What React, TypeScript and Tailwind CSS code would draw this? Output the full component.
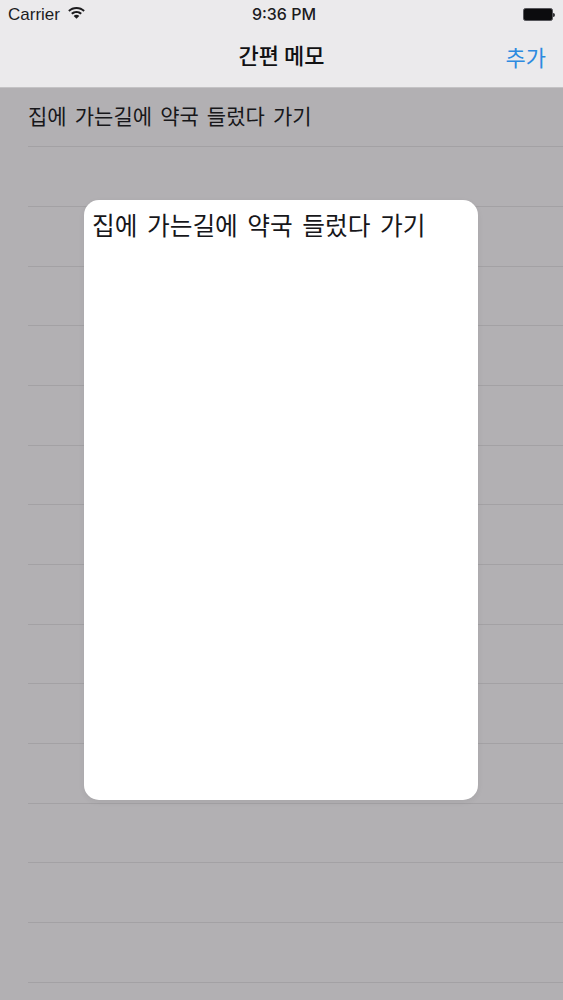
const rows = Array.from({ length: 15 }, (_, i) => i);

function WifiIcon() {
  return (
    <svg className="mb-[3px] ml-px" width="17" height="12" viewBox="0 0 17 12" fill="#1c1c1e">
      <path d="M8.5 0C5.3 0 2.4 1.2 0.2 3.3L1.6 4.8C3.4 3 5.8 2 8.5 2s5.1 1 6.9 2.8l1.4-1.5C14.6 1.2 11.7 0 8.5 0z" />
      <path d="M8.5 3.9c-2.1 0-4 .8-5.4 2.2l1.4 1.5C5.5 6.6 6.9 6 8.5 6s3 .6 4 1.6l1.4-1.5C12.5 4.7 10.6 3.9 8.5 3.9z" />
      <path d="M8.5 7.7c-1.1 0-2.1.4-2.8 1.2L8.5 11.8l2.8-2.9C10.6 8.1 9.6 7.7 8.5 7.7z" />
    </svg>
  );
}

function BatteryIcon() {
  return (
    <div className="flex items-center">
      <div className="w-[30px] h-[13px] bg-[#0c0c0e] rounded-[2.5px] border border-[#55555a]" />
      <div className="w-[2px] h-[4px] bg-[#333336] rounded-r-sm" />
    </div>
  );
}

export default function App() {
  return (
    <div className="relative w-[563px] h-[1000px] overflow-hidden bg-[#b2b0b3] font-['Inter','Noto_Sans_CJK_KR',sans-serif]">
      {/* header */}
      <header className="h-[87.5px] bg-[#ebeaec] border-b border-[#c4c3c5] flex flex-col">
        <div className="h-[29px] px-[8px] flex items-center justify-between relative text-[#1c1c1e]">
          <div className="flex items-center gap-[7px] font-['Liberation_Sans',sans-serif] text-[17px]">
            <span>Carrier</span>
            <WifiIcon />
          </div>
          <span className="absolute left-0 right-0 text-center pl-[5px] pb-[1px] font-['Inter',sans-serif] text-[16px] font-medium">9:36 PM</span>
          <BatteryIcon />
        </div>
        <div className="flex-1 flex items-center justify-between relative pr-[17px] pb-[3px]">
          <span className="absolute left-0 right-0 pb-[3px] text-center text-[22px] font-medium text-[#111113] font-['Noto_Sans_CJK_KR',sans-serif]">간편 메모</span>
          <span />
          <span className="text-[22px] text-[#2d8ae0] font-['Noto_Sans_CJK_KR',sans-serif]">추가</span>
        </div>
      </header>

      {/* list */}
      <div className="pl-[28px]">
        {rows.map((i) => (
          <div key={i} className="h-[59.7px] border-b border-[#a3a1a4] flex items-center">
            {i === 0 && (
              <span className="pb-[2px] text-[21px] [word-spacing:3.4px] text-[#17171a] font-['Noto_Sans_CJK_KR',sans-serif]">집에 가는길에 약국 들렀다 가기</span>
            )}
          </div>
        ))}
      </div>

      {/* memo popup */}
      <div className="absolute left-[84px] top-[200px] w-[394px] h-[600px] bg-white rounded-[15px] shadow-[0_2px_6px_rgba(0,0,0,0.06)] px-[8px] py-[4px]">
        <p className="text-[24.7px] [word-spacing:4px] leading-[40px] text-[#17171a] font-['Noto_Sans_CJK_KR',sans-serif]">집에 가는길에 약국 들렀다 가기</p>
      </div>
    </div>
  );
}
